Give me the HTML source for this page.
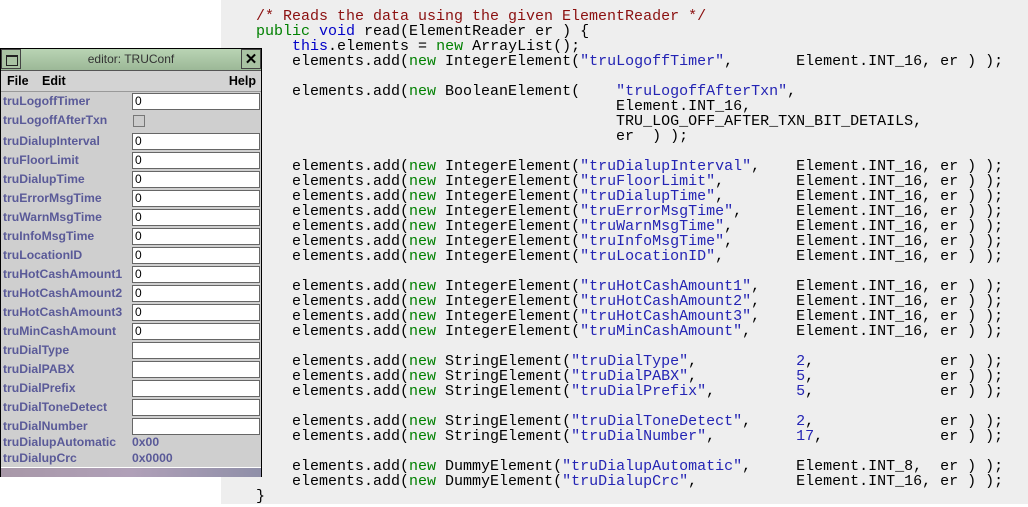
<!DOCTYPE html>
<html><head><style>
body{margin:0;width:1028px;height:507px;background:#fff;position:relative;overflow:hidden;font-family:"Liberation Sans",sans-serif}
#code{position:absolute;left:221px;top:0;width:807px;height:504px;background:#eeeeee}
pre{position:absolute;margin:0;left:256px;top:9px;font-family:"Liberation Mono",monospace;font-size:15px;line-height:15px;color:#000}
.c{color:#8b1010}.k{color:#008000}.b{color:#0000c8}.s{color:#2424b4}
#win{position:absolute;left:0;top:48px;width:260px;height:427px;border:1px solid #000;background:#cfcfcf}
#title{position:absolute;left:0;top:0;width:260px;height:21px;background:linear-gradient(#b9d4b4,#9cb897);border-bottom:1px solid #555}
#title .t{position:absolute;left:22px;right:22px;top:3px;text-align:center;font-size:12px;color:#333}
.btn{position:absolute;top:0;width:20px;height:20px;border:1px solid #444;box-sizing:border-box;background:#a9c3a3}
#menu{position:absolute;top:22px;left:0;width:260px;height:20px;font-weight:bold;font-size:12.5px;border-bottom:1px solid #999;background:#d3d3d3}
.row{position:absolute;left:2px;font-weight:bold;font-size:12.2px;color:#5a5a98;height:19px;line-height:19px;width:256px}
.f{position:absolute;left:129px;top:1px;width:128px;height:17px;box-sizing:border-box;background:#fff;border:1px solid #666;font-weight:normal;color:#000;font-size:12px;line-height:15px;padding-left:2px}
</style></head><body>
<div id="code"></div>
<pre><span class="c">/* Reads the data using the given ElementReader */</span>
<span class="k">public</span> <span class="b">void</span> read(ElementReader er ) {
    <span class="b">this</span>.elements = <span class="k">new</span> ArrayList();
    elements.add(<span class="k">new</span> IntegerElement(<span class="s">"truLogoffTimer"</span>,       Element.INT_16, er ) );

    elements.add(<span class="k">new</span> BooleanElement(    <span class="s">"truLogoffAfterTxn"</span>,
                                        Element.INT_16,
                                        TRU_LOG_OFF_AFTER_TXN_BIT_DETAILS,
                                        er  ) );

    elements.add(<span class="k">new</span> IntegerElement(<span class="s">"truDialupInterval"</span>,    Element.INT_16, er ) );
    elements.add(<span class="k">new</span> IntegerElement(<span class="s">"truFloorLimit"</span>,        Element.INT_16, er ) );
    elements.add(<span class="k">new</span> IntegerElement(<span class="s">"truDialupTime"</span>,        Element.INT_16, er ) );
    elements.add(<span class="k">new</span> IntegerElement(<span class="s">"truErrorMsgTime"</span>,      Element.INT_16, er ) );
    elements.add(<span class="k">new</span> IntegerElement(<span class="s">"truWarnMsgTime"</span>,       Element.INT_16, er ) );
    elements.add(<span class="k">new</span> IntegerElement(<span class="s">"truInfoMsgTime"</span>,       Element.INT_16, er ) );
    elements.add(<span class="k">new</span> IntegerElement(<span class="s">"truLocationID"</span>,        Element.INT_16, er ) );

    elements.add(<span class="k">new</span> IntegerElement(<span class="s">"truHotCashAmount1"</span>,    Element.INT_16, er ) );
    elements.add(<span class="k">new</span> IntegerElement(<span class="s">"truHotCashAmount2"</span>,    Element.INT_16, er ) );
    elements.add(<span class="k">new</span> IntegerElement(<span class="s">"truHotCashAmount3"</span>,    Element.INT_16, er ) );
    elements.add(<span class="k">new</span> IntegerElement(<span class="s">"truMinCashAmount"</span>,     Element.INT_16, er ) );

    elements.add(<span class="k">new</span> StringElement(<span class="s">"truDialType"</span>,           <span class="s">2</span>,              er ) );
    elements.add(<span class="k">new</span> StringElement(<span class="s">"truDialPABX"</span>,           <span class="s">5</span>,              er ) );
    elements.add(<span class="k">new</span> StringElement(<span class="s">"truDialPrefix"</span>,         <span class="s">5</span>,              er ) );

    elements.add(<span class="k">new</span> StringElement(<span class="s">"truDialToneDetect"</span>,     <span class="s">2</span>,              er ) );
    elements.add(<span class="k">new</span> StringElement(<span class="s">"truDialNumber"</span>,         <span class="s">17</span>,             er ) );

    elements.add(<span class="k">new</span> DummyElement(<span class="s">"truDialupAutomatic"</span>,     Element.INT_8,  er ) );
    elements.add(<span class="k">new</span> DummyElement(<span class="s">"truDialupCrc"</span>,           Element.INT_16, er ) );
}</pre>
<div id="win">
<div id="title"><div class="btn" style="left:0"><div style="position:absolute;left:4px;top:5px;width:10px;height:8px;border:1px solid #222;border-top-width:2px"></div></div><div class="t">editor: TRUConf</div><div class="btn" style="right:0;font-size:15px;font-weight:bold;text-align:center;line-height:19px">✕</div></div>
<div id="menu"><span style="position:absolute;left:6px;top:3px">File</span><span style="position:absolute;left:41px;top:3px">Edit</span><span style="position:absolute;right:5px;top:3px">Help</span></div>
<div class="row" style="top:43px">truLogoffTimer<div class="f">0</div></div>
<div class="row" style="top:62px">truLogoffAfterTxn<div style="position:absolute;left:130px;top:4px;width:12px;height:12px;border:1px solid #777;background:#ccc;box-sizing:border-box"></div></div>
<div class="row" style="top:83px">truDialupInterval<div class="f">0</div></div>
<div class="row" style="top:102px">truFloorLimit<div class="f">0</div></div>
<div class="row" style="top:121px">truDialupTime<div class="f">0</div></div>
<div class="row" style="top:140px">truErrorMsgTime<div class="f">0</div></div>
<div class="row" style="top:159px">truWarnMsgTime<div class="f">0</div></div>
<div class="row" style="top:178px">truInfoMsgTime<div class="f">0</div></div>
<div class="row" style="top:197px">truLocationID<div class="f">0</div></div>
<div class="row" style="top:216px">truHotCashAmount1<div class="f">0</div></div>
<div class="row" style="top:235px">truHotCashAmount2<div class="f">0</div></div>
<div class="row" style="top:254px">truHotCashAmount3<div class="f">0</div></div>
<div class="row" style="top:273px">truMinCashAmount<div class="f">0</div></div>
<div class="row" style="top:292px">truDialType<div class="f"></div></div>
<div class="row" style="top:311px">truDialPABX<div class="f"></div></div>
<div class="row" style="top:330px">truDialPrefix<div class="f"></div></div>
<div class="row" style="top:349px">truDialToneDetect<div class="f"></div></div>
<div class="row" style="top:368px">truDialNumber<div class="f"></div></div>
<div class="row" style="top:385px;height:16px;line-height:16px">truDialupAutomatic<span style="position:absolute;left:129px">0x00</span></div>
<div class="row" style="top:401px;height:16px;line-height:16px">truDialupCrc<span style="position:absolute;left:129px">0x0000</span></div>
<div style="position:absolute;left:0;top:418px;width:260px;height:9px;border-top:1px solid #fff;background:linear-gradient(90deg,#a898a8,#b0a0b8 50%,#8f8fa8)"></div>
</div>
</body></html>
